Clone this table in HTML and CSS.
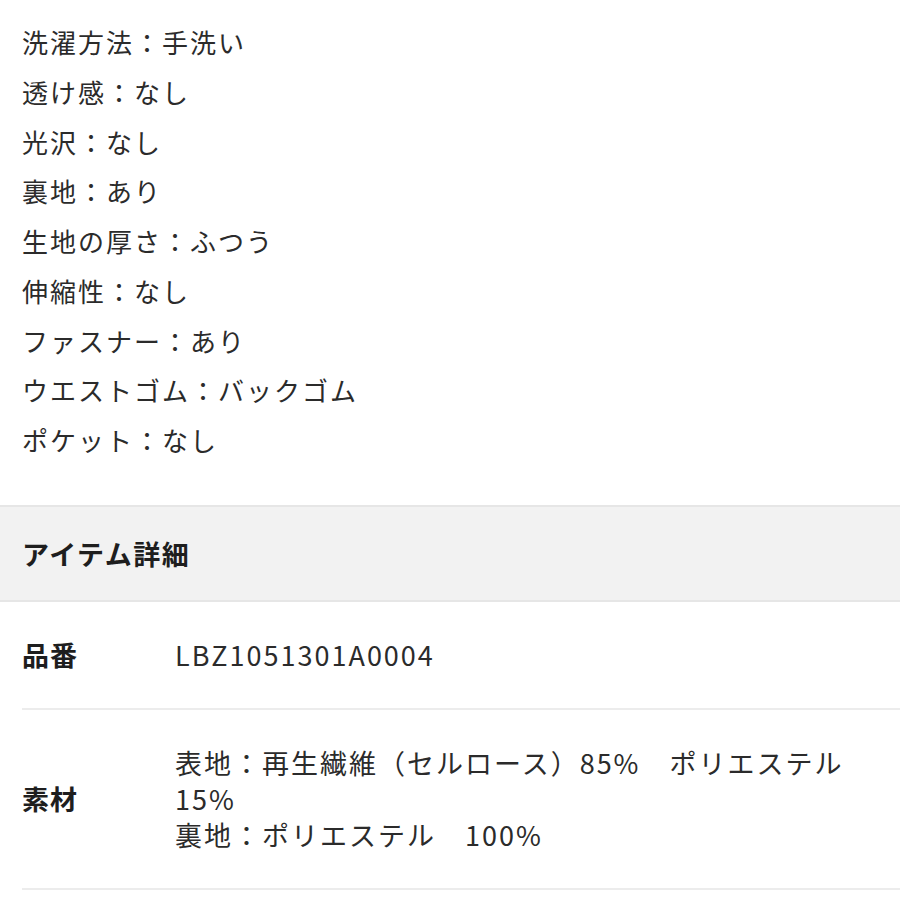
FILE: index.html
```html
<!DOCTYPE html>
<html lang="ja">
<head>
<meta charset="utf-8">
<link rel="stylesheet" href="styles.css">
</head>
<body>
<ul class="specs">
  <li>洗濯方法：手洗い</li>
  <li>透け感：なし</li>
  <li>光沢：なし</li>
  <li>裏地：あり</li>
  <li>生地の厚さ：ふつう</li>
  <li>伸縮性：なし</li>
  <li>ファスナー：あり</li>
  <li>ウエストゴム：バックゴム</li>
  <li>ポケット：なし</li>
</ul>
<h2 class="section-head">アイテム詳細</h2>
<div class="details">
  <div class="row">
    <div class="label">品番</div>
    <div class="value">LBZ1051301A0004</div>
  </div>
  <div class="row">
    <div class="label">素材</div>
    <div class="value">表地：再生繊維（セルロース）85%　ポリエステル15%<br>裏地：ポリエステル　100%</div>
  </div>
</div>
</body>
</html>
```

FILE: styles.css
```css
html, body {
  margin: 0;
  padding: 0;
  background: #fff;
}
body {
  font-family: "Noto Sans CJK JP", "Noto Sans", sans-serif;
  color: #2b2b2b;
  width: 900px;
  overflow: hidden;
}
.specs {
  list-style: none;
  margin: 0;
  padding: 17px 0 0 22px;
}
.specs li {
  font-size: 26px;
  line-height: 49.75px;
  height: 49.75px;
  letter-spacing: 2px;
}
.section-head {
  margin: 40px 0 0;
  background: #f2f2f2;
  border-top: 2px solid #e6e6e6;
  border-bottom: 2px solid #e6e6e6;
  height: 97px;
  box-sizing: border-box;
  display: flex;
  align-items: center;
  padding-left: 22px;
  font-size: 27px;
  font-weight: 700;
  color: #1e1e1e;
  letter-spacing: 1.5px;
}
.details {
  margin-left: 22px;
}
.row {
  display: flex;
  align-items: center;
  border-bottom: 2px solid #ececec;
  padding: 35px 20px 35px 0;
}
.label {
  width: 153px;
  flex: none;
  font-size: 27px;
  font-weight: 700;
  line-height: 36px;
  letter-spacing: 1px;
  color: #1e1e1e;
}
.value {
  flex: 1;
  font-size: 27px;
  line-height: 36px;
  letter-spacing: 2px;
}
```
